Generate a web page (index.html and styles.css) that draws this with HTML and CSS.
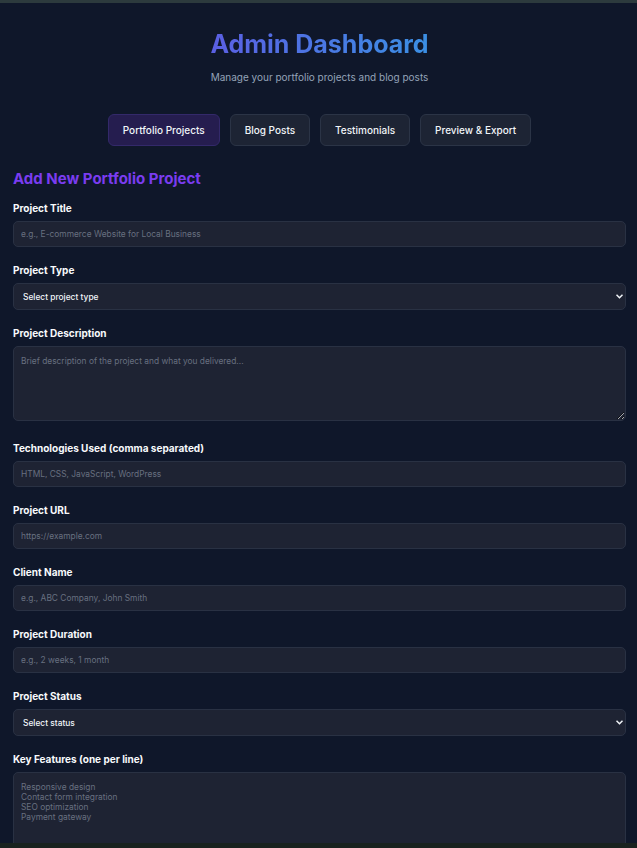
FILE: index.html
```
<!DOCTYPE html>
<html lang="en">
<head>
<meta charset="utf-8">
<title>Admin Dashboard</title>
<link rel="stylesheet" href="styles.css">
</head>
<body>
<div class="topbar"></div>
<main class="page">
  <header class="header">
    <h1 class="title">Admin Dashboard</h1>
    <p class="subtitle">Manage your portfolio projects and blog posts</p>
  </header>
  <nav class="tabs">
    <button class="tab tab-active">Portfolio Projects</button>
    <button class="tab">Blog Posts</button>
    <button class="tab">Testimonials</button>
    <button class="tab">Preview &amp; Export</button>
  </nav>
  <section class="form-section">
    <h2 class="section-title">Add New Portfolio Project</h2>
    <div class="field">
      <label class="label">Project Title</label>
      <input class="control" type="text" placeholder="e.g., E-commerce Website for Local Business">
    </div>
    <div class="field">
      <label class="label">Project Type</label>
      <div class="select-wrap">
        <select class="control select"><option>Select project type</option></select>
        <svg class="chev" width="7" height="5" viewBox="0 0 7 5"><path d="M0.5 0.8 L3.5 3.8 L6.5 0.8" fill="none" stroke="#f1f5f9" stroke-width="1.5"/></svg>
      </div>
    </div>
    <div class="field">
      <label class="label">Project Description</label>
      <textarea class="control area" placeholder="Brief description of the project and what you delivered..."></textarea>
    </div>
    <div class="field">
      <label class="label">Technologies Used (comma separated)</label>
      <input class="control" type="text" placeholder="HTML, CSS, JavaScript, WordPress">
    </div>
    <div class="field">
      <label class="label">Project URL</label>
      <input class="control" type="text" placeholder="https://example.com">
    </div>
    <div class="field">
      <label class="label">Client Name</label>
      <input class="control" type="text" placeholder="e.g., ABC Company, John Smith">
    </div>
    <div class="field">
      <label class="label">Project Duration</label>
      <input class="control" type="text" placeholder="e.g., 2 weeks, 1 month">
    </div>
    <div class="field">
      <label class="label">Project Status</label>
      <div class="select-wrap">
        <select class="control select"><option>Select status</option></select>
        <svg class="chev" width="7" height="5" viewBox="0 0 7 5"><path d="M0.5 0.8 L3.5 3.8 L6.5 0.8" fill="none" stroke="#f1f5f9" stroke-width="1.5"/></svg>
      </div>
    </div>
    <div class="field">
      <label class="label">Key Features (one per line)</label>
      <textarea class="control area area-tall" placeholder="Responsive design
Contact form integration
SEO optimization
Payment gateway"></textarea>
    </div>
  </section>
</main>
<div class="bottombar"></div>
</body>
</html>
```
FILE: styles.css
```
html, body {
  margin: 0;
  padding: 0;
  background: #0f172a;
  color-scheme: dark;
}
body {
  font-family: Inter, "Noto Sans", sans-serif;
  color: #f1f5f9;
  overflow: hidden;
  height: 848px;
}
.topbar {
  height: 3px;
  background: #2c3a3d;
}
.bottombar {
  position: fixed;
  left: 0;
  right: 0;
  bottom: 0;
  height: 5px;
  background: #19221f;
}
.page {
  padding: 0 11px 0 13px;
}
.header {
  text-align: center;
  padding-top: 27px;
}
.title {
  margin: 0;
  font-size: 25px;
  line-height: 28px;
  font-weight: 700;
  background: linear-gradient(90deg, #5b5fe3, #3b8fe3);
  -webkit-background-clip: text;
  background-clip: text;
  color: transparent;
  display: inline-block;
}
.subtitle {
  margin: 12px 0 0;
  font-size: 10px;
  line-height: 14px;
  color: #94a3b8;
}
.tabs {
  display: flex;
  justify-content: center;
  gap: 10px;
  margin-top: 30px;
}
.tab {
  font-family: inherit;
  font-size: 10px;
  font-weight: 500;
  color: #f1f5f9;
  background: #1d2434;
  border: 1px solid #2b3446;
  border-radius: 6px;
  height: 32px;
  padding: 0 14px;
}
.tab-active {
  background: #251d4f;
  border-color: #33296a;
}
.form-section {
  margin-top: 23px;
}
.section-title {
  margin: 0 0 12px;
  font-size: 15px;
  line-height: 20px;
  font-weight: 700;
  color: #7a3cf0;
}
.field {
  margin-bottom: 16px;
}
.label {
  display: block;
  font-size: 10px;
  line-height: 14px;
  font-weight: 700;
  color: #f8fafc;
  margin-bottom: 6px;
}
.control {
  display: block;
  box-sizing: border-box;
  width: 100%;
  height: 26px;
  margin: 0;
  padding: 0 7px;
  font-family: inherit;
  font-size: 8.4px;
  color: #f1f5f9;
  background: #1e2333;
  border: 1px solid #293143;
  border-radius: 5px;
  outline: none;
}
.control::placeholder {
  color: #687080;
}
.select-wrap {
  position: relative;
}
.select {
  appearance: none;
  -webkit-appearance: none;
  padding: 0 16px 0 9px;
  font-weight: 500;
  height: 27px;
}
.chev {
  position: absolute;
  right: 3px;
  top: 11px;
  pointer-events: none;
}
.area {
  height: 75px;
  padding: 9px 7px;
  line-height: 10px;
  resize: vertical;
  margin-bottom: 20px;
}
.area-tall {
  height: 100px;
}
```
